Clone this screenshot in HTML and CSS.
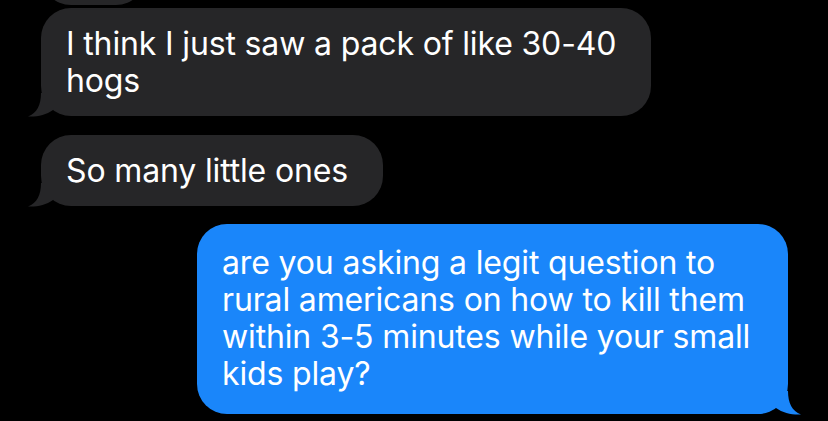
FILE: index.html
```html
<!DOCTYPE html>
<html>
<head>
<meta charset="utf-8">
<link rel="stylesheet" href="styles.css">
</head>
<body>
<div class="thread">
  <div class="bubble in prev"></div>
  <div class="bubble in first">
    I think I just saw a pack of like 30-40<br>hogs
    <svg class="tail tail-in" viewBox="0 0 26 24" aria-hidden="true"><path d="M13,0 C13,12 9,20 0,23.5 C9,24 18,22 25,17 L25,0 Z"/></svg>
  </div>
  <div class="bubble in second">
    So many little ones
    <svg class="tail tail-in" viewBox="0 0 26 24" aria-hidden="true"><path d="M13,0 C13,12 9,20 0,23.5 C9,24 18,22 25,17 L25,0 Z"/></svg>
  </div>
  <div class="bubble out">
    are you asking a legit question to<br>rural americans on how to kill them<br>within 3-5 minutes while your small<br>kids play?
    <svg class="tail tail-out" viewBox="0 0 26 24" aria-hidden="true"><path d="M13,0 C13,12 17,20 26,23.5 C17,24 8,22 1,17 L1,0 Z"/></svg>
  </div>
</div>
</body>
</html>
```

FILE: styles.css
```css
html, body {
  margin: 0;
  padding: 0;
  background: #000;
}
body {
  width: 828px;
  height: 421px;
  overflow: hidden;
  font-family: Inter, "Liberation Sans", sans-serif;
  -webkit-font-smoothing: antialiased;
}
.thread {
  display: flex;
  flex-direction: column;
}
.bubble {
  position: relative;
  box-sizing: border-box;
  border-radius: 30px;
  color: #fff;
  font-size: 32px;
  line-height: 37px;
  letter-spacing: -0.15px;
  padding: 17px 25px;
  white-space: nowrap;
}
.in {
  background: #262628;
  align-self: flex-start;
  margin-left: 41px;
  fill: #262628;
}
.prev {
  width: 105px;
  height: 60px;
  margin-top: -55px;
  padding: 0;
}
.first {
  width: 610px;
  margin-top: 3px;
}
.second {
  width: 342px;
  margin-top: 19px;
}
.out {
  background: #1a86fa;
  fill: #1a86fa;
  align-self: flex-end;
  margin-right: 40px;
  margin-top: 18px;
  width: 591px;
  padding: 20px 25px 22px;
}
.tail {
  position: absolute;
  bottom: -1px;
  width: 26px;
  height: 24px;
}
.tail-in {
  left: -13px;
}
.tail-out {
  right: -13px;
}
```
